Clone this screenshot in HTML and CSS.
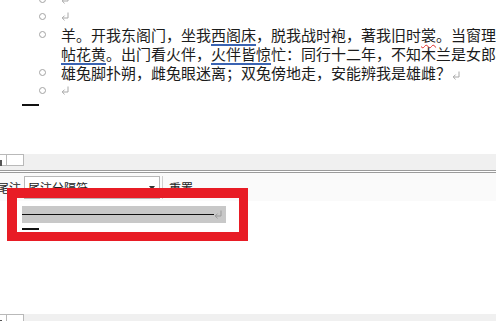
FILE: index.html
```html
<!DOCTYPE html>
<html lang="zh">
<head>
<meta charset="utf-8">
<title>尾注分隔符</title>
<link rel="stylesheet" href="styles.css">
</head>
<body>
<div class="page">
  <div class="doc">
    <div class="para empty"><span class="bullet"></span><svg class="pm" width="8" height="9" viewBox="0 0 8 9"><path d="M7 0.5V6H1.2M3.6 3.6L1.2 6L3.6 8.4" fill="none" stroke="#a8a8a8" stroke-width="1"/></svg></div>
    <div class="para empty"><span class="bullet"></span><svg class="pm" width="8" height="9" viewBox="0 0 8 9"><path d="M7 0.5V6H1.2M3.6 3.6L1.2 6L3.6 8.4" fill="none" stroke="#a8a8a8" stroke-width="1"/></svg></div>
    <div class="para text"><span class="bullet"></span><div class="lines">羊。开我东阁门，坐我<span class="blue">西阁床</span>，脱我战时袍，著我旧时<span class="wavy">裳</span>。当窗理<br><span class="blue">帖花黄</span>。出门看火伴，<span class="blue">火伴皆惊</span>忙：同行十二年，不知木兰是女郎</div></div>
    <div class="para text"><span class="bullet"></span><div class="lines">雄兔脚扑朔，雌兔眼迷离；双兔傍地走，安能辨我是雄雌？<svg class="pm inline" width="8" height="9" viewBox="0 0 8 9"><path d="M7 0.5V6H1.2M3.6 3.6L1.2 6L3.6 8.4" fill="none" stroke="#a8a8a8" stroke-width="1"/></svg></div></div>
    <div class="para empty"><span class="bullet"></span><svg class="pm" width="8" height="9" viewBox="0 0 8 9"><path d="M7 0.5V6H1.2M3.6 3.6L1.2 6L3.6 8.4" fill="none" stroke="#a8a8a8" stroke-width="1"/></svg></div>
  </div>
  <div class="caret"></div>

  <div class="tabs top"><span class="tab first"><span class="mark"></span></span><span class="tab second"></span></div>
  <div class="rule"></div>
  <div class="panel">
    <span class="label">尾注</span>
    <div class="select"><span>尾注分隔符</span><span class="arrow"></span></div>
    <span class="vsep"></span>
    <span class="reset">重置</span>
  </div>

  <div class="note">
    <div class="sepbar"><span class="sepline"></span><svg class="pm" width="8" height="9" viewBox="0 0 8 9"><path d="M7 0.5V6H1.2M3.6 3.6L1.2 6L3.6 8.4" fill="none" stroke="#9a9a9a" stroke-width="1"/></svg></div>
    <div class="caret small"></div>
  </div>
  <div class="fill"></div>
  <div class="tabs bottom"><span class="tab first"><span class="mark"></span></span><span class="tab second"></span></div>

  <div class="redbox"></div>
</div>
</body>
</html>
```

FILE: styles.css
```css
* { box-sizing: border-box; }
html, body {
  margin: 0;
  padding: 0;
  background: #fff;
}
body {
  width: 496px;
  height: 321px;
  overflow: hidden;
  font-family: "Noto Sans CJK SC", "Noto Sans", sans-serif;
  color: #1c1c1c;
}
.page {
  position: relative;
  width: 496px;
  height: 321px;
  display: flex;
  flex-direction: column;
  overflow: hidden;
}
.doc {
  margin-top: -9px;
  display: flex;
  flex-direction: column;
}
.para {
  display: flex;
  padding-left: 39px;
  font-size: 15px;
  white-space: nowrap;
}
.para.empty {
  height: 17px;
  align-items: center;
}
.para.text {
  align-items: flex-start;
  line-height: 19px;
}
.bullet {
  flex: none;
  width: 7px;
  height: 7px;
  border: 1.5px solid #a3a3a3;
  border-radius: 50%;
  background: #fff;
  margin-right: 15px;
}
.para.text .bullet {
  margin-top: 6px;
}
.pm {
  display: block;
  flex: none;
}
.pm.inline {
  display: inline-block;
  vertical-align: -1px;
  margin-left: 1px;
}
.lines {
  white-space: nowrap;
}
.blue {
  text-decoration: underline;
  text-decoration-color: #3a63b2;
  text-decoration-thickness: 2px;
  text-underline-offset: 3px;
}
.wavy {
  text-decoration: underline wavy #e0302a;
  text-decoration-thickness: 1px;
  text-underline-offset: 3px;
}
.caret {
  margin-top: 5px;
  margin-left: 22px;
  width: 17px;
  height: 2px;
  background: #111;
  flex: none;
}
.tabs {
  flex: none;
  display: flex;
  background: #f0f0f0;
}
.tabs.top {
  margin-top: 48px;
  height: 16px;
}
.tabs.bottom {
  height: 7px;
}
.tab {
  display: block;
  height: 12px;
  background: #fff;
  border: 1px solid #b9b9b9;
  border-left: none;
  position: relative;
}
.tab.first {
  width: 7px;
}
.tab.second {
  width: 17px;
}
.tab .mark {
  position: absolute;
  left: 0;
  top: 5px;
  width: 2px;
  height: 6px;
  background: #555;
}
.rule {
  flex: none;
  height: 3px;
  border-top: 1px solid #9b9b9b;
  border-bottom: 1px solid #9b9b9b;
  background: #fff;
}
.panel {
  flex: none;
  height: 28px;
  background: #fafafa;
  display: flex;
  align-items: center;
  font-size: 12px;
  color: #222;
  padding-top: 1px;
}
.label {
  margin-left: -3px;
}
.select {
  margin-left: 3px;
  width: 136px;
  height: 23px;
  background: #fff;
  border: 1px solid #b8b8b8;
  display: flex;
  align-items: center;
  padding: 0 4px 0 3px;
}
.arrow {
  margin-left: auto;
  width: 0;
  height: 0;
  border-left: 3px solid transparent;
  border-right: 3px solid transparent;
  border-top: 4px solid #333;
}
.vsep {
  margin-left: 2px;
  width: 1px;
  height: 23px;
  background: #cfcfcf;
}
.reset {
  margin-left: 6px;
}
.note {
  flex: none;
  padding-left: 22px;
  padding-top: 5px;
}
.sepbar {
  width: 204px;
  height: 17px;
  background: #c8c8c8;
  display: flex;
  align-items: center;
}
.sepline {
  width: 192px;
  height: 1px;
  background: #111;
  margin-right: 0;
}
.caret.small {
  margin-left: 0;
  height: 2px;
}
.fill {
  flex: 1;
}
.redbox {
  position: absolute;
  left: 7px;
  top: 188px;
  width: 241px;
  height: 53px;
  border: 10px solid #e81c25;
  border-right-width: 9px;
  border-bottom-width: 9px;
}
```
